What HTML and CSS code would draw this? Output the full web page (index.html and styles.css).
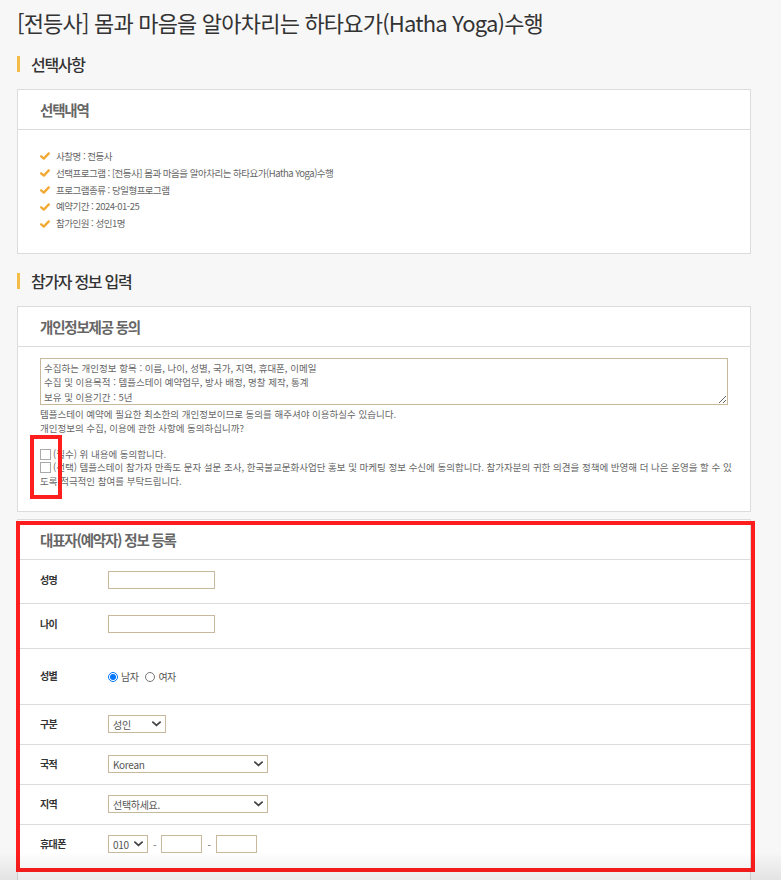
FILE: index.html
```html
<!DOCTYPE html>
<html lang="ko">
<head>
    <meta charset="UTF-8">
    <meta name="viewport" content="width=device-width, initial-scale=1.0">
    <title>템플스테이 예약</title>
    <link rel="stylesheet" href="styles.css">
</head>
<body>

    <div class="wrap">
        <h1 class="prog-title">[전등사] 몸과 마음을 알아차리는 하타요가(Hatha Yoga)수행</h1>

        <h2 class="sec-title">선택사항</h2>
        <div class="box">
            <h3 class="box-head">선택내역</h3>
            <ul class="check-list">
                <li><svg class="ico-check" viewBox="0 0 10 8"><path d="M1.2 4.3 L3.8 6.6 L8.8 1.4"/></svg>사찰명 : 전등사</li>
                <li><svg class="ico-check" viewBox="0 0 10 8"><path d="M1.2 4.3 L3.8 6.6 L8.8 1.4"/></svg>선택프로그램 : [전등사] 몸과 마음을 알아차리는 하타요가(Hatha Yoga)수행</li>
                <li><svg class="ico-check" viewBox="0 0 10 8"><path d="M1.2 4.3 L3.8 6.6 L8.8 1.4"/></svg>프로그램종류 : 당일형프로그램</li>
                <li><svg class="ico-check" viewBox="0 0 10 8"><path d="M1.2 4.3 L3.8 6.6 L8.8 1.4"/></svg>예약기간 : 2024-01-25</li>
                <li><svg class="ico-check" viewBox="0 0 10 8"><path d="M1.2 4.3 L3.8 6.6 L8.8 1.4"/></svg>참가인원 : 성인1명</li>
            </ul>
        </div>

        <h2 class="sec-title">참가자 정보 입력</h2>
        <div class="box agree-box">
            <h3 class="box-head">개인정보제공 동의</h3>
            <div class="box-body">
                <textarea class="terms" readonly>수집하는 개인정보 항목 : 이름, 나이, 성별, 국가, 지역, 휴대폰, 이메일
수집 및 이용목적 : 템플스테이 예약업무, 방사 배정, 명찰 제작, 통계
보유 및 이용기간 : 5년</textarea>
                <p class="agree-desc">템플스테이 예약에 필요한 최소한의 개인정보이므로 동의를 해주셔야 이용하실수 있습니다.<br>개인정보의 수집, 이용에 관한 사항에 동의하십니까?</p>
                <div class="agree-checks">
                    <label><input type="checkbox" name="agree1">(필수) 위 내용에 동의합니다.</label><br>
                    <label><input type="checkbox" name="agree2">(선택) 템플스테이 참가자 만족도 문자 설문 조사, 한국불교문화사업단 홍보 및 마케팅 정보 수신에 동의합니다. 참가자분의 귀한 의견을 정책에 반영해 더 나은 운영을 할 수 있도록 적극적인 참여를 부탁드립니다.</label>
                </div>
            </div>
            <span class="mark mark-checks"></span>
        </div>

        <div class="box form-box">
            <h3 class="box-head">대표자(예약자) 정보 등록</h3>

            <div class="frow">
                <span class="flabel">성명</span>
                <input type="text" class="txt" name="name">
            </div>
            <div class="frow frow-b">
                <span class="flabel">나이</span>
                <input type="text" class="txt" name="age">
            </div>
            <div class="frow frow-radio">
                <span class="flabel">성별</span>
                <label class="rad"><input type="radio" name="sex" value="M" checked>남자</label>
                <label class="rad"><input type="radio" name="sex" value="F">여자</label>
            </div>
            <div class="frow frow-sel">
                <span class="flabel">구분</span>
                <span class="sel sel-s">
                    <select name="kind"><option>성인</option><option>청소년</option></select>
                    <svg class="ico-arrow" viewBox="0 0 10 6"><path d="M1 1 L5 4.6 L9 1"/></svg>
                </span>
            </div>
            <div class="frow frow-sel">
                <span class="flabel">국적</span>
                <span class="sel sel-l">
                    <select name="nation"><option>Korean</option></select>
                    <svg class="ico-arrow" viewBox="0 0 10 6"><path d="M1 1 L5 4.6 L9 1"/></svg>
                </span>
            </div>
            <div class="frow frow-sel">
                <span class="flabel">지역</span>
                <span class="sel sel-l">
                    <select name="area"><option>선택하세요.</option></select>
                    <svg class="ico-arrow" viewBox="0 0 10 6"><path d="M1 1 L5 4.6 L9 1"/></svg>
                </span>
            </div>
            <div class="frow frow-tel">
                <span class="flabel">휴대폰</span>
                <div class="tel">
                    <span class="sel sel-xs">
                        <select name="tel1"><option>010</option><option>011</option></select>
                        <svg class="ico-arrow" viewBox="0 0 10 6"><path d="M1 1 L5 4.6 L9 1"/></svg>
                    </span>
                    <span class="dash">-</span>
                    <input type="text" class="txt txt-s" name="tel2">
                    <span class="dash">-</span>
                    <input type="text" class="txt txt-s" name="tel3">
                </div>
            </div>

            <span class="mark mark-form"></span>
        </div>
    </div>

    <div class="shade"></div>

</body>
</html>
```

FILE: styles.css
```css
body {
    margin: 0;
    padding: 7px 0 40px;
    background-color: #f7f7f7;
    font-family: "Noto Sans CJK KR", "Noto Sans", sans-serif;
    color: #555;
}

.wrap {
    width: 734px;
    margin-left: 17px;
}

.prog-title {
    margin: 0;
    font-size: 22px;
    font-weight: 400;
    line-height: 30px;
    letter-spacing: -0.8px;
    color: #333;
}

.sec-title {
    margin: 19px 0 17px;
    padding-left: 11px;
    border-left: 3px solid #f5bd48;
    font-size: 16px;
    font-weight: 500;
    line-height: 16px;
    letter-spacing: -1.3px;
    color: #333;
}

.box {
    position: relative;
    background-color: #fff;
    border: 1px solid #dcdcdc;
}

.box-head {
    margin: 0;
    padding: 0 22px;
    height: 39px;
    line-height: 39px;
    border-bottom: 1px solid #dcdcdc;
    font-size: 14.5px;
    font-weight: 700;
    letter-spacing: -1.2px;
    color: #666;
}

/* 선택내역 */
.check-list {
    list-style: none;
    margin: 0;
    padding: 18px 22px 21px;
}

.check-list li {
    display: flex;
    align-items: center;
    font-size: 9.5px;
    line-height: 16.8px;
    letter-spacing: -0.5px;
    color: #666;
}

.ico-check {
    width: 10px;
    height: 8px;
    margin-right: 6px;
    fill: none;
    stroke: #f2a934;
    stroke-width: 2.3;
    stroke-linecap: round;
    stroke-linejoin: round;
}

/* 개인정보 동의 */
.agree-box {
    margin-bottom: 7px;
}

.box-body {
    padding: 11px 16px 23px 22px;
}

.terms {
    display: block;
    box-sizing: border-box;
    width: 688px;
    height: 47px;
    margin: 0;
    padding: 2px 3px;
    border: 1px solid #c9b99c;
    font-family: inherit;
    font-size: 9.5px;
    line-height: 14.5px;
    color: #666;
    overflow: hidden;
    resize: both;
}

.agree-desc {
    margin: 2px 0 0;
    font-size: 9.5px;
    line-height: 14.5px;
    color: #666;
}

.agree-checks {
    margin-top: 12px;
    font-size: 9.5px;
    line-height: 13.5px;
    color: #666;
}

.agree-checks input[type="checkbox"] {
    appearance: none;
    box-sizing: border-box;
    width: 11px;
    height: 11px;
    margin: 0 2px 0 0;
    vertical-align: -2px;
    border: 1px solid #aaa;
    background-color: #fff;
}

/* 대표자 정보 */
.frow {
    display: flex;
    align-items: center;
    padding: 11px 22px 14px;
    border-bottom: 1px solid #dcdcdc;
}

.frow-b {
    padding-bottom: 15px;
}

.frow-radio {
    padding: 20px 22px;
}

.frow-sel {
    padding: 10px 22px 11px;
}

.frow-tel {
    padding: 10px 22px 45px;
    border-bottom: 0;
}

.flabel {
    width: 68px;
    margin-top: -2px;
    font-size: 10px;
    font-weight: 700;
    letter-spacing: -0.6px;
    color: #333;
}

.txt {
    box-sizing: border-box;
    width: 107px;
    height: 18px;
    margin: 0;
    padding: 0 4px;
    border: 1px solid #c9b99c;
    background-color: #fff;
    font-family: inherit;
    font-size: 10px;
}

.txt-s {
    width: 41px;
}

.rad {
    display: flex;
    align-items: center;
    margin-right: 7px;
    font-size: 10px;
    letter-spacing: -0.5px;
    color: #555;
}

.rad input {
    width: 10px;
    height: 10px;
    margin: 0 3px 0 0;
}

.sel {
    position: relative;
    display: inline-block;
}

.sel select {
    appearance: none;
    box-sizing: border-box;
    display: block;
    height: 18px;
    margin: 0;
    padding: 0 16px 0 4px;
    border: 1px solid #c9b99c;
    border-radius: 0;
    background-color: #fff;
    font-family: inherit;
    font-size: 10px;
    letter-spacing: -0.3px;
    color: #555;
}

.sel-s select { width: 58px; }
.sel-l select { width: 160px; }
.sel-xs select { width: 40px; }

.ico-arrow {
    position: absolute;
    right: 5px;
    top: 6px;
    width: 9px;
    height: 6px;
    fill: none;
    stroke: #444;
    stroke-width: 2;
    stroke-linecap: round;
    stroke-linejoin: round;
    pointer-events: none;
}

.tel {
    display: flex;
    align-items: center;
    gap: 5px;
}

.dash {
    font-size: 10px;
    color: #666;
}

/* 빨간 표시 */
.mark {
    position: absolute;
    box-sizing: border-box;
    border: 4px solid #ff1e1e;
    pointer-events: none;
}

.mark-checks {
    left: 12px;
    top: 128px;
    width: 32px;
    height: 64px;
}

.mark-form {
    left: -2px;
    top: 1px;
    width: 739px;
    height: 351px;
}

.shade {
    position: fixed;
    left: 0;
    right: 0;
    bottom: 0;
    height: 28px;
    background: linear-gradient(rgba(0, 0, 0, 0), rgba(0, 0, 0, 0.08));
    pointer-events: none;
}
```
